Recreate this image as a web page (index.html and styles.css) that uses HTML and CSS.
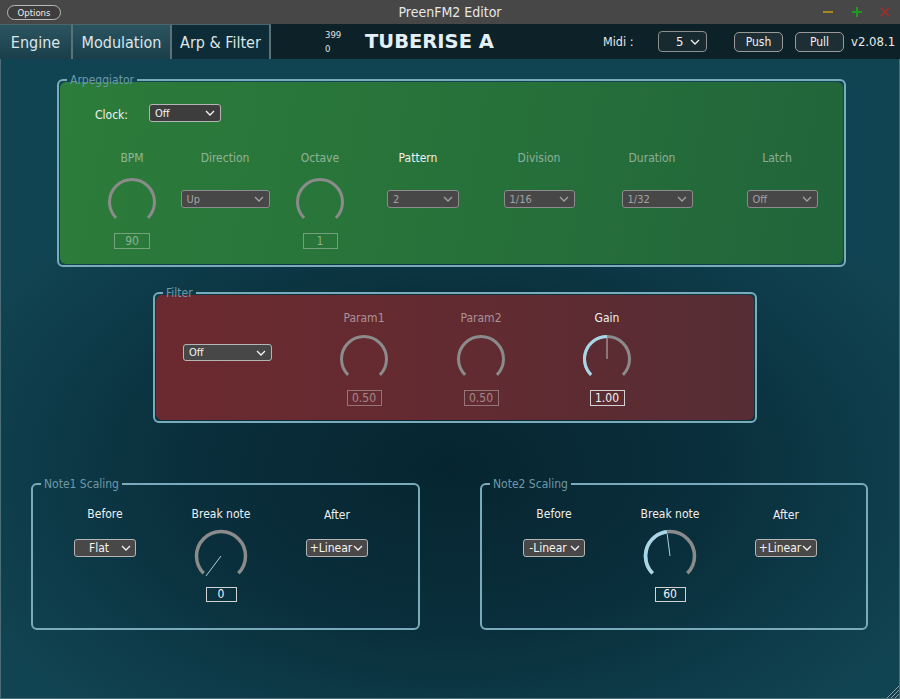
FILE: index.html
```html
<!DOCTYPE html>
<html>
<head>
<meta charset="utf-8">
<title>PreenFM2 Editor</title>
<link rel="stylesheet" href="styles.css">
</head>
<body>
<div class="window">
  <div class="titlebar">
    <div class="tb-left"><button class="opt-btn">Options</button></div>
    <div class="tb-title">PreenFM2 Editor</div>
    <div class="tb-right">
      <svg class="wc" width="10" height="10" viewBox="0 0 10 10"><line x1="0" y1="5" x2="10" y2="5" stroke="#a8861e" stroke-width="2"/></svg>
      <svg class="wc plus" width="10" height="10" viewBox="0 0 10 10"><line x1="0" y1="5" x2="10" y2="5" stroke="#1f9c22" stroke-width="2"/><line x1="5" y1="0" x2="5" y2="10" stroke="#1f9c22" stroke-width="2"/></svg>
      <svg class="wc close" width="10" height="10" viewBox="0 0 10 10"><line x1="0.5" y1="0.5" x2="9.5" y2="9.5" stroke="#a52a2a" stroke-width="1.4"/><line x1="9.5" y1="0.5" x2="0.5" y2="9.5" stroke="#a52a2a" stroke-width="1.4"/></svg>
    </div>
  </div>

  <div class="header">
    <div class="tab">Engine</div>
    <div class="tab">Modulation</div>
    <div class="tab active">Arp &amp; Filter</div>
    <div class="preset-num"><span>399</span><span>0</span></div>
    <div class="preset-name">TUBERISE A</div>
    <span class="midi-label">Midi :</span>
    <div class="midi-dd"><span>5</span><svg class="chev" width="10" height="6" viewBox="0 0 10 6"><polyline points="1,1 5,5 9,1"/></svg></div>
    <button class="hbtn push">Push</button>
    <button class="hbtn pull">Pull</button>
    <span class="version">v2.08.1</span>
  </div>

  <div class="main">
    <fieldset class="group arp-group">
      <legend>Arpeggiator</legend>
      <div class="panel green">
        <div class="clock-row">
          <span class="clock-label">Clock:</span>
          <div class="dd on clock-dd"><span>Off</span><svg class="chev" width="10" height="6" viewBox="0 0 10 6"><polyline points="1,1 5,5 9,1"/></svg></div>
        </div>
        <div class="arp-grid">
          <div class="col">
            <div class="lbl dis">BPM</div>
            <svg class="knob k50" width="50" height="50" viewBox="0 0 50 50"><path class="ring" d="M9.09 40.91 A22.5 22.5 0 1 1 40.91 40.91"/></svg>
            <div class="val dis w36">90</div>
          </div>
          <div class="col">
            <div class="lbl dis">Direction</div>
            <div class="dd off arp-dd w89"><span>Up</span><svg class="chev" width="10" height="6" viewBox="0 0 10 6"><polyline points="1,1 5,5 9,1"/></svg></div>
          </div>
          <div class="col">
            <div class="lbl dis">Octave</div>
            <svg class="knob k50" width="50" height="50" viewBox="0 0 50 50"><path class="ring" d="M9.09 40.91 A22.5 22.5 0 1 1 40.91 40.91"/></svg>
            <div class="val dis w35">1</div>
          </div>
          <div class="col">
            <div class="lbl">Pattern</div>
            <div class="dd off arp-dd w72 shift"><span>2</span><svg class="chev" width="10" height="6" viewBox="0 0 10 6"><polyline points="1,1 5,5 9,1"/></svg></div>
          </div>
          <div class="col">
            <div class="lbl dis">Division</div>
            <div class="dd off arp-dd w71"><span>1/16</span><svg class="chev" width="10" height="6" viewBox="0 0 10 6"><polyline points="1,1 5,5 9,1"/></svg></div>
          </div>
          <div class="col">
            <div class="lbl dis">Duration</div>
            <div class="dd off arp-dd w71 shift"><span>1/32</span><svg class="chev" width="10" height="6" viewBox="0 0 10 6"><polyline points="1,1 5,5 9,1"/></svg></div>
          </div>
          <div class="col">
            <div class="lbl dis">Latch</div>
            <div class="dd off arp-dd w71 shift"><span>Off</span><svg class="chev" width="10" height="6" viewBox="0 0 10 6"><polyline points="1,1 5,5 9,1"/></svg></div>
          </div>
        </div>
      </div>
    </fieldset>

    <fieldset class="group filter-group">
      <legend>Filter</legend>
      <div class="panel red">
        <div class="filter-row">
          <div class="dd on filter-dd"><span>Off</span><svg class="chev" width="10" height="6" viewBox="0 0 10 6"><polyline points="1,1 5,5 9,1"/></svg></div>
          <div class="fcol p1">
            <div class="lbl dis">Param1</div>
            <svg class="knob k50" width="50" height="50" viewBox="0 0 50 50"><path class="ring" d="M9.09 40.91 A22.5 22.5 0 1 1 40.91 40.91"/></svg>
            <div class="val dis w35">0.50</div>
          </div>
          <div class="fcol p2">
            <div class="lbl dis">Param2</div>
            <svg class="knob k50" width="50" height="50" viewBox="0 0 50 50"><path class="ring" d="M9.09 40.91 A22.5 22.5 0 1 1 40.91 40.91"/></svg>
            <div class="val dis w35">0.50</div>
          </div>
          <div class="fcol gain">
            <div class="lbl">Gain</div>
            <svg class="knob k50" width="50" height="50" viewBox="0 0 50 50"><path class="ring" d="M9.09 40.91 A22.5 22.5 0 1 1 40.91 40.91"/><path class="arc" d="M9.09 40.91 A22.5 22.5 0 0 1 25 2.5"/><line class="ptr" x1="25" y1="25" x2="25" y2="4"/></svg>
            <div class="val w35">1.00</div>
          </div>
        </div>
      </div>
    </fieldset>

    <div class="note-row">
      <fieldset class="group note-group n1">
        <legend>Note1 Scaling</legend>
        <div class="note-grid">
          <div class="col">
            <div class="lbl">Before</div>
            <div class="dd on note-dd w62"><span>Flat</span><svg class="chev" width="10" height="6" viewBox="0 0 10 6"><polyline points="1,1 5,5 9,1"/></svg></div>
          </div>
          <div class="col">
            <div class="lbl">Break note</div>
            <svg class="knob k56" width="56" height="56" viewBox="0 0 56 56"><path class="ring" d="M10.68 45.32 A24.5 24.5 0 1 1 45.32 45.32"/><line class="ptr blue" x1="28" y1="28" x2="13" y2="48"/></svg>
            <div class="val w31">0</div>
          </div>
          <div class="col">
            <div class="lbl after">After</div>
            <div class="dd on note-dd w62"><span>+Linear</span><svg class="chev" width="10" height="6" viewBox="0 0 10 6"><polyline points="1,1 5,5 9,1"/></svg></div>
          </div>
        </div>
      </fieldset>
      <fieldset class="group note-group n2">
        <legend>Note2 Scaling</legend>
        <div class="note-grid">
          <div class="col">
            <div class="lbl">Before</div>
            <div class="dd on note-dd w62"><span>-Linear</span><svg class="chev" width="10" height="6" viewBox="0 0 10 6"><polyline points="1,1 5,5 9,1"/></svg></div>
          </div>
          <div class="col">
            <div class="lbl">Break note</div>
            <svg class="knob k56" width="56" height="56" viewBox="0 0 56 56"><path class="ring" d="M10.68 45.32 A24.5 24.5 0 1 1 45.32 45.32"/><path class="arc" d="M10.68 45.32 A24.5 24.5 0 0 1 24.83 3.71"/><line class="ptr blue" x1="28" y1="28" x2="25.2" y2="6"/></svg>
            <div class="val w31">60</div>
          </div>
          <div class="col">
            <div class="lbl after">After</div>
            <div class="dd on note-dd w62"><span>+Linear</span><svg class="chev" width="10" height="6" viewBox="0 0 10 6"><polyline points="1,1 5,5 9,1"/></svg></div>
          </div>
        </div>
      </fieldset>
    </div>

    <svg class="grip" width="14" height="14" viewBox="0 0 14 14">
      <line x1="2" y1="14" x2="14" y2="2"/>
      <line x1="6" y1="14" x2="14" y2="6"/>
      <line x1="10" y1="14" x2="14" y2="10"/>
    </svg>
  </div>
</div>
</body>
</html>
```

FILE: styles.css
```css
* { box-sizing: border-box; }

html, body {
  margin: 0;
  padding: 0;
  background: #0c2a36;
}

body {
  font-family: "DejaVu Sans Condensed", "DejaVu Sans", sans-serif;
  font-stretch: semi-condensed;
  color: #e8e8e8;
  width: 900px;
  height: 699px;
  overflow: hidden;
}

.window {
  width: 900px;
  height: 699px;
  display: flex;
  flex-direction: column;
}

/* ---------- title bar ---------- */
.titlebar {
  height: 24px;
  background: #474747;
  display: grid;
  grid-template-columns: 1fr auto 1fr;
  align-items: center;
}

.tb-left { display: flex; align-items: center; }

.opt-btn {
  margin-left: 7px;
  width: 54px;
  height: 15px;
  padding: 0;
  border: 1px solid #b9b9b9;
  border-radius: 8px;
  background: #3d3d3d;
  color: #eeeeee;
  font-family: inherit;
  font-stretch: semi-condensed;
  font-size: 9.5px;
  line-height: 13px;
}

.tb-title {
  font-size: 14px;
  color: #e6e6e6;
}

.tb-right {
  display: flex;
  justify-content: flex-end;
  align-items: center;
  padding-right: 10px;
}

.wc { display: block; }
.wc.plus { margin-left: 19px; }
.wc.close { margin-left: 18px; }

/* ---------- header ---------- */
.header {
  height: 35px;
  background: #0d2128;
  display: flex;
  align-items: center;
  padding-right: 5px;
}

.tab {
  height: 35px;
  display: flex;
  align-items: center;
  justify-content: center;
  font-size: 16px;
  color: #dce6e9;
  background: linear-gradient(#2b5461, #1a3f4b);
  border-right: 2px solid #5b7279;
  border-top: 1px solid #4c646c;
}
.tab:nth-child(1) { width: 73px; }
.tab:nth-child(2) { width: 99px; }
.tab.active { width: 99px; background: #0d2c37; }

.preset-num {
  margin-left: 54px;
  width: 16px;
  display: flex;
  flex-direction: column;
  font-size: 9.5px;
  line-height: 14px;
  color: #e2e2e2;
}

.preset-name {
  margin-left: 24px;
  font-family: "DejaVu Sans", sans-serif;
  font-stretch: normal;
  font-weight: bold;
  font-size: 19.5px;
  color: #e4f0f6;
  white-space: nowrap;
}

.midi-label {
  margin-left: auto;
  width: 55px;
  font-size: 12.5px;
  color: #e8e8e8;
}

.midi-dd {
  width: 49px;
  height: 21px;
  border: 1px solid #8e8e8e;
  border-radius: 4px;
  background: #172a30;
  display: flex;
  align-items: center;
  justify-content: space-between;
  padding: 0 6px 0 17px;
  font-size: 13px;
  color: #f0f0f0;
}

.hbtn {
  width: 49px;
  height: 20px;
  padding: 0;
  border: 1px solid #9a9a9a;
  border-radius: 5px;
  background: #1d2f35;
  color: #f0f0f0;
  font-family: inherit;
  font-stretch: semi-condensed;
  font-size: 12px;
}
.hbtn.push { margin-left: 27px; }
.hbtn.pull { margin-left: 12px; }

.version {
  margin-left: 7px;
  width: 44px;
  white-space: nowrap;
  font-size: 13px;
  color: #eaeaea;
}

/* ---------- chevrons ---------- */
.chev { display: block; flex: none; }
.chev polyline {
  fill: none;
  stroke: currentColor;
  stroke-width: 1.3;
}

/* ---------- main area ---------- */
.main {
  position: relative;
  flex: 1;
  border: 1px solid #4e6e77;
  border-top: none;
  background:
    radial-gradient(ellipse 60% 52% at 50% 64%, #062530 0%, #0a2f3c 50%, #0e3c4a 80%, #114452 100%);
  display: flex;
  flex-direction: column;
  align-items: flex-start;
}

.group {
  margin: 0;
  padding: 1px;
  min-inline-size: 0;
  border: 2px solid #7aabbb;
  border-radius: 6px;
}

.group legend {
  font-size: 12px;
  line-height: 2px;
  padding: 0 3px;
  margin-left: 7px;
  color: #6e99a8;
}

.panel {
  border-radius: 6px;
}
.panel.green {
  height: 182px;
  background: linear-gradient(100deg, #2c7c3a 0%, #27723a 50%, #21653a 100%);
}
.panel.red {
  height: 125px;
  background: linear-gradient(90deg, #6b2a2f 0%, #622b31 50%, #562d34 100%);
}

.arp-group {
  margin: 20px 0 0 56px;
  width: 789px;
  height: 188px;
}

.clock-row {
  display: flex;
  align-items: center;
  padding: 22px 0 0 35px;
}
.clock-label {
  width: 54px;
  padding-top: 4px;
  font-size: 12px;
  color: #f2f2f2;
}

.lbl {
  font-size: 12px;
  line-height: 16px;
  height: 16px;
  color: #f0f0f0;
  white-space: nowrap;
}
.lbl.dis { color: rgba(232, 232, 232, 0.55); }

.arp-grid {
  display: grid;
  grid-template-columns: 50px 136px 54px 142px 100px 126px 124px;
  padding-left: 47px;
  margin-top: 28px;
}

.col {
  display: flex;
  flex-direction: column;
  align-items: center;
}

.knob { display: block; flex: none; }
.knob .ring { fill: none; stroke: #8b8b8b; stroke-width: 3; }
.knob .arc { fill: none; stroke: #a8d8e8; stroke-width: 3; }
.knob .ptr { stroke: #bdbdbd; stroke-width: 1; }
.knob .ptr.blue { stroke: #a3d3e3; }
.k56 .ring, .k56 .arc { stroke-width: 3.5; }

.arp-grid .knob { margin-top: 11px; }
.arp-grid .val { margin-top: 6px; }
.arp-grid .dd { margin-top: 24px; }
.arp-grid .dd.shift { margin-left: 10px; }

.val {
  height: 16px;
  border: 1px solid #d2d2d2;
  font-size: 12px;
  line-height: 14px;
  text-align: center;
  color: #f4f4f4;
}
.val.dis {
  border-color: rgba(220, 220, 220, 0.42);
  color: rgba(230, 230, 230, 0.5);
}
.w36 { width: 36px; }
.w35 { width: 35px; }
.w31 { width: 31px; height: 15px; line-height: 13px; }

.dd {
  height: 18px;
  border: 1px solid #8c8c8c;
  border-radius: 3px;
  background: #474747;
  display: flex;
  align-items: center;
  justify-content: space-between;
  padding: 0 5px 0 5px;
  font-size: 11px;
}
.dd.off { color: #a3a3a3; }
.dd.on { color: #f4f4f4; border-color: #b5b5b5; }
.w89 { width: 89px; }
.w72 { width: 72px; }
.w71 { width: 71px; }
.w62 { width: 62px; }

.clock-dd { width: 72px; background: #3d3d3d; }

/* ---------- filter ---------- */
.filter-group {
  margin: 25px 0 0 152px;
  width: 604px;
  height: 131px;
}

.filter-row {
  display: flex;
  align-items: flex-start;
  padding: 15px 0 0 27px;
}

.filter-dd {
  width: 89px;
  height: 17px;
  margin-top: 34px;
}

.fcol {
  width: 70px;
  display: flex;
  flex-direction: column;
  align-items: center;
}
.fcol.p1 { margin-left: 57px; }
.fcol.p2 { margin-left: 47px; }
.fcol.gain { margin-left: 56px; }
.fcol .knob { margin-top: 8px; }
.fcol .val { margin-top: 6px; }

/* ---------- note scaling ---------- */
.note-row {
  display: flex;
  gap: 60px;
  margin-top: 60px;
  padding-left: 30px;
}

.note-group {
  height: 147px;
}
.note-group.n1 { width: 389px; }
.note-group.n2 { width: 388px; }

.note-grid {
  display: grid;
  grid-template-columns: 116px 116px 116px;
  padding: 20px 0 0 13px;
}
.note-grid .lbl.after { margin-top: 1px; }
.note-grid .dd { margin-top: 17px; }
.note-grid .lbl.after + .dd { margin-top: 16px; }
.note-grid .knob { margin-top: 6px; }
.note-grid .val { margin-top: 3px; }

.note-dd {
  height: 18px;
  background: #484848;
  padding: 0 4px 0 2px;
  font-size: 12px;
}
.note-dd span {
  flex: 1;
  text-align: center;
}

/* ---------- resize grip ---------- */
.grip {
  position: absolute;
  right: 0;
  bottom: 0;
}
.grip line {
  stroke: #9a9a9a;
  stroke-width: 1;
}
```
